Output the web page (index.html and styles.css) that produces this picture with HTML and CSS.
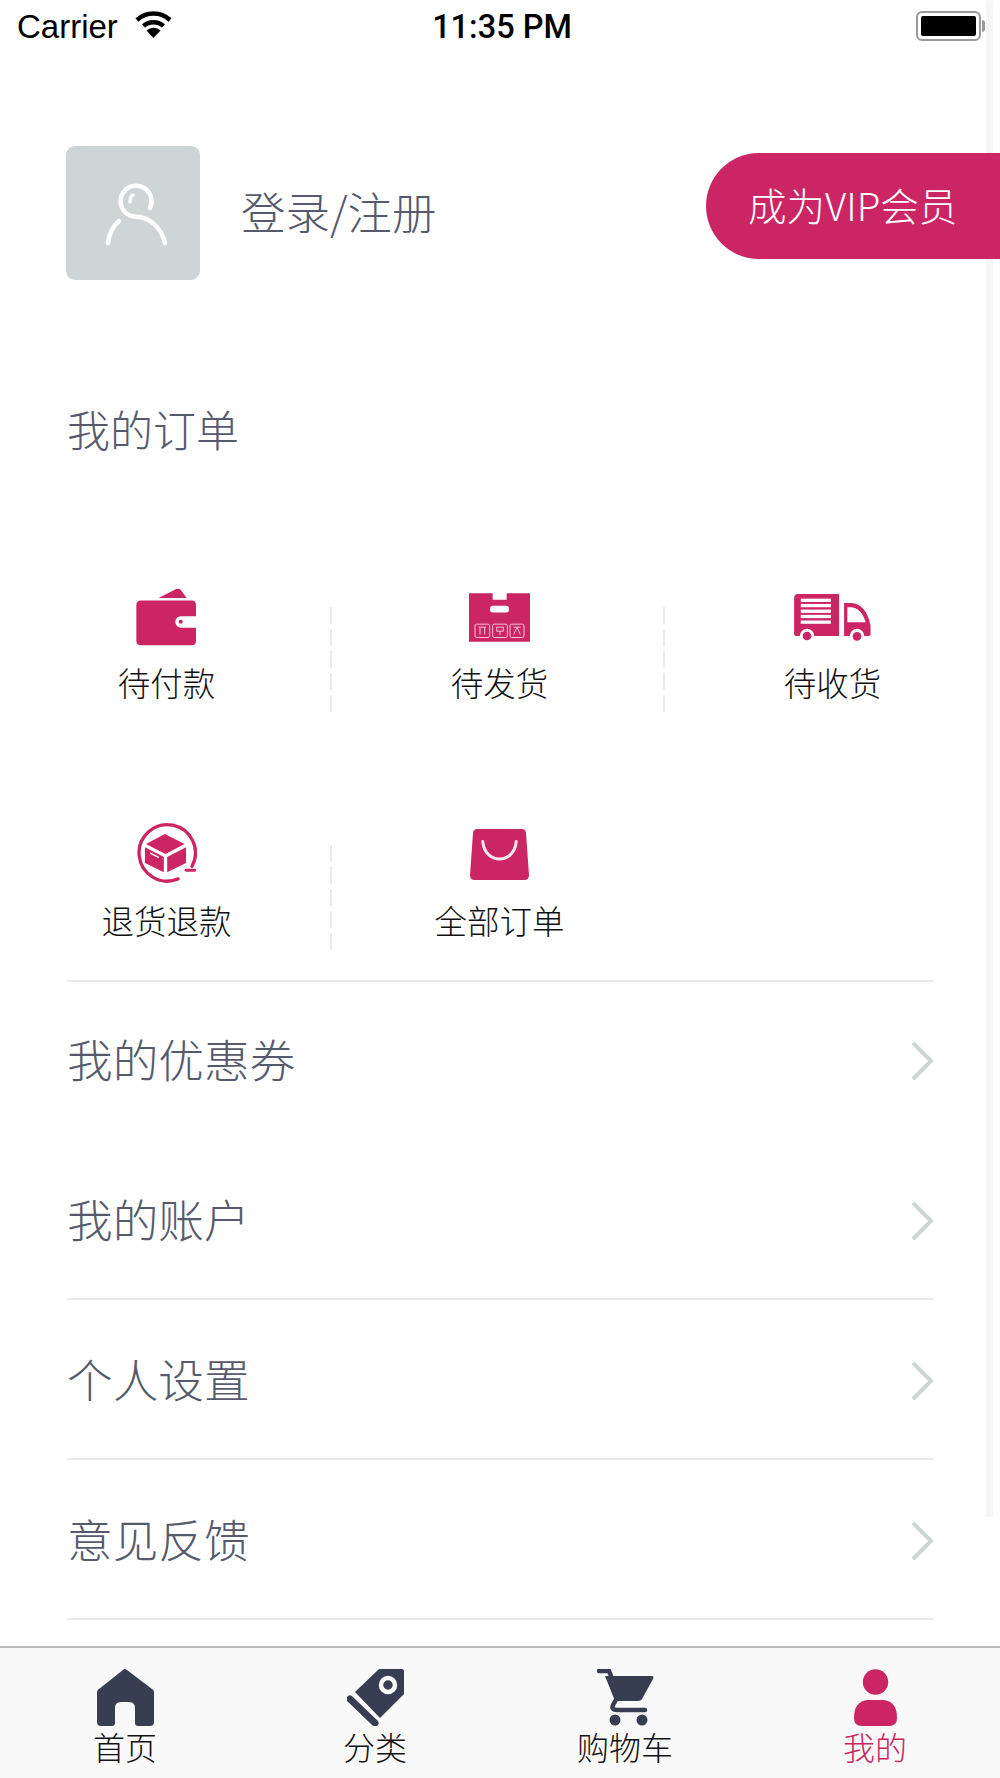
FILE: index.html
```html
<!DOCTYPE html>
<html lang="zh-CN">
<head>
    <meta charset="UTF-8">
    <meta name="viewport" content="width=device-width, initial-scale=1.0">
    <title>我的</title>
    <link rel="stylesheet" href="styles.css">
</head>
<body>
    <div class="page">
        <div class="scrollbar"></div>

        <div class="status-bar">
            <div class="status-left">
                <span>Carrier</span>
                <svg class="wifi" viewBox="0 0 37 27">
                    <path d="M2 9 A24 24 0 0 1 35 9" fill="none" stroke="#000" stroke-width="4.5"/>
                    <path d="M8.5 15 A15 15 0 0 1 28.5 15" fill="none" stroke="#000" stroke-width="4.5"/>
                    <path d="M18.5 27 L11.5 19.5 A10 10 0 0 1 25.5 19.5 Z" fill="#000"/>
                </svg>
            </div>
            <div class="status-time">11:35 PM</div>
            <div class="battery"><div class="battery-fill"></div></div>
        </div>

        <main class="content">
            <div class="profile">
                <div class="avatar">
                    <svg viewBox="0 0 134 134" width="134" height="134">
                        <g fill="none" stroke="#fff" stroke-width="4.5" stroke-linecap="round">
                            <path d="M84 62 A15.5 15.5 0 1 0 59 66 C62 70 67 71 74 71 C88 74 96 85 99 97"/>
                            <path d="M53 75 C46 81 43 89 42 97"/>
                            <path d="M64 56 C64 53 65 50 67 49" stroke-width="3.5"/>
                        </g>
                    </svg>
                </div>
                <div class="login-text">登录/注册</div>
                <div class="vip-button">成为VIP会员</div>
            </div>

            <div class="section-title">我的订单</div>

            <div class="order-grid">
                <div class="order-item has-divider">
                    <div class="order-icon">
                        <svg viewBox="108 55 182 175" width="61" height="58">
                            <path fill="#cb2564" d="M175 85 L228 58 Q236 55 242 61 L260 85 Z"/>
                            <path fill="#cb2564" d="M122 93 H275 Q288 93 288 106 V140 H243 A17.5 17.5 0 0 0 243 175 H288 V214 Q288 228 274 228 H122 Q108 228 108 214 V107 Q108 93 122 93 Z"/>
                            <circle fill="#cb2564" cx="242" cy="157" r="6"/>
                        </svg>
                    </div>
                    <div class="order-label">待付款</div>
                </div>
                <div class="order-item has-divider">
                    <div class="order-icon">
                        <svg viewBox="1107 70 183 146" width="61" height="49">
                            <path fill="#cb2564" d="M1107 70 H1178 V90 H1220 V70 H1290 V216 H1107 Z"/>
                            <rect fill="#fff" x="1170" y="108" width="57" height="20" rx="9"/>
                            <g fill="none" stroke="#f3c3d6" stroke-width="3">
                                <rect x="1125" y="163" width="44" height="40" rx="5"/>
                                <rect x="1178" y="163" width="44" height="40" rx="5"/>
                                <rect x="1230" y="163" width="42" height="40" rx="5"/>
                                <path d="M1136 172 H1158 M1140 172 V194 M1154 172 V194"/>
                                <path d="M1190 172 H1210 V184 H1190 Z M1200 184 V196"/>
                                <path d="M1240 172 H1262 M1251 172 L1241 194 M1251 172 L1261 194"/>
                            </g>
                        </svg>
                    </div>
                    <div class="order-label">待发货</div>
                </div>
                <div class="order-item">
                    <div class="order-icon">
                        <svg viewBox="732 70 232 142" width="77" height="47">
                            <path fill="#cb2564" d="M744 70 H868 V197 H793 A22 22 0 0 0 749 197 H738 Q732 197 732 191 V82 Q732 70 744 70 Z"/>
                            <g fill="#fff">
                                <rect x="752" y="84" width="91" height="10"/>
                                <rect x="752" y="100" width="91" height="10"/>
                                <rect x="752" y="117" width="91" height="10"/>
                                <rect x="752" y="133" width="91" height="10"/>
                                <rect x="752" y="150" width="91" height="10"/>
                            </g>
                            <circle fill="#cb2564" cx="771" cy="197" r="13"/>
                            <path fill="#cb2564" d="M883 97 H905 Q950 100 963 165 V191 Q963 197 957 197 H944 A22 22 0 0 0 900 197 H883 Z"/>
                            <path fill="#fff" d="M893 110 H905 Q935 112 948 155 H893 Z"/>
                            <circle fill="#cb2564" cx="922" cy="198" r="13"/>
                        </svg>
                    </div>
                    <div class="order-label">待收货</div>
                </div>
                <div class="order-item has-divider">
                    <div class="order-icon">
                        <svg class="return-icon" viewBox="165 67 190 186" width="63" height="62">
                            <path fill="none" stroke="#cb2564" stroke-width="10" stroke-linecap="round" d="M298 238 A85 85 0 1 1 340 200"/>
                            <path fill="none" stroke="#cb2564" stroke-width="9" stroke-linecap="round" d="M322 212 H348"/>
                            <path fill="#cb2564" d="M258 103 L318 133 L260 163 L201 133 Z"/>
                            <path fill="#cb2564" d="M198 143 L255 172 V218 L198 190 Z"/>
                            <path fill="#cb2564" d="M265 172 L322 143 V190 L265 218 Z"/>
                            <path fill="#fff" d="M214 158 L240 171 V176 L214 163 Z"/>
                        </svg>
                    </div>
                    <div class="order-label">退货退款</div>
                </div>
                <div class="order-item">
                    <div class="order-icon">
                        <svg class="bag-icon" viewBox="88 88 176 152" width="59" height="51">
                            <path fill="#cb2564" d="M110 88 H242 Q254 88 255 100 L264 226 Q264 240 250 240 H102 Q88 240 88 226 L97 100 Q98 88 110 88 Z"/>
                            <path fill="none" stroke="#fbe6ee" stroke-width="9" stroke-linecap="round" d="M126 125 C132 195 220 195 226 125"/>
                        </svg>
                    </div>
                    <div class="order-label">全部订单</div>
                </div>
            </div>

            <div class="menu-list">
                <div class="menu-row no-line">
                    <span>我的优惠券</span>
                    <svg class="chevron" viewBox="0 0 23 40"><path d="M2 2 L20 20 L2 38"/></svg>
                </div>
                <div class="menu-row">
                    <span>我的账户</span>
                    <svg class="chevron" viewBox="0 0 23 40"><path d="M2 2 L20 20 L2 38"/></svg>
                </div>
                <div class="menu-row">
                    <span>个人设置</span>
                    <svg class="chevron" viewBox="0 0 23 40"><path d="M2 2 L20 20 L2 38"/></svg>
                </div>
                <div class="menu-row">
                    <span>意见反馈</span>
                    <svg class="chevron" viewBox="0 0 23 40"><path d="M2 2 L20 20 L2 38"/></svg>
                </div>
            </div>
        </main>

        <nav class="tab-bar">
            <div class="tab">
                <svg viewBox="0 0 57 57" width="57" height="57">
                    <path fill="#383e52" d="M28 0 Q29 0 30 1 L55 20 Q57 21 57 23 V53 Q57 57 53 57 H41 Q38 57 38 54 V39 Q38 33 32 33 H24 Q18 33 18 39 V54 Q18 57 15 57 H4 Q0 57 0 53 V23 Q0 21 2 20 L26 1 Q27 0 28 0 Z"/>
                </svg>
                <div class="tab-label">首页</div>
            </div>
            <div class="tab">
                <svg viewBox="0 0 57 57" width="57" height="57">
                    <path fill="#383e52" d="M32 0 H55 Q57 0 57 2 V25 L33 49 L8 23 Z"/>
                    <circle cx="41" cy="16" r="7" fill="#383e52" stroke="#f9f9f9" stroke-width="4.5"/>
                    <path fill="none" stroke="#383e52" stroke-width="7" stroke-linecap="round" d="M3 30 L28 54"/>
                </svg>
                <div class="tab-label">分类</div>
            </div>
            <div class="tab">
                <svg viewBox="0 0 57 57" width="57" height="57">
                    <path fill="none" stroke="#383e52" stroke-width="4.5" stroke-linecap="round" d="M2 2 H12 L20 22"/>
                    <path fill="#383e52" d="M8 7 H55 Q57 7 56 10 L45 30 Q44 32 41 32 H18 Z"/>
                    <path fill="none" stroke="#383e52" stroke-width="4.5" stroke-linecap="round" d="M20 29 L16 36 Q14 41 20 41 H48"/>
                    <circle cx="18" cy="51" r="5.5" fill="#383e52"/>
                    <circle cx="45" cy="51" r="5.5" fill="#383e52"/>
                </svg>
                <div class="tab-label">购物车</div>
            </div>
            <div class="tab">
                <svg viewBox="0 0 43 57" width="43" height="57">
                    <circle cx="21.5" cy="13" r="12.7" fill="#cb2564"/>
                    <path fill="#cb2564" d="M14 31 H29 Q43 32 43 49 Q43 57 35 57 H8 Q0 57 0 49 Q0 32 14 31 Z"/>
                </svg>
                <div class="tab-label active">我的</div>
            </div>
        </nav>
    </div>
</body>
</html>
```

FILE: styles.css
```css
* {
    box-sizing: border-box;
}

body {
    margin: 0;
    background: #fff;
    font-family: "Noto Sans CJK SC", "Liberation Sans", sans-serif;
}

.page {
    position: relative;
    width: 1000px;
    height: 1778px;
    display: flex;
    flex-direction: column;
    overflow: hidden;
    background: #fff;
}

.scrollbar {
    position: absolute;
    top: 0;
    left: 986px;
    width: 7px;
    height: 1517px;
    border-radius: 3px;
    background: #f5f5f6;
}

.status-bar {
    position: relative;
    height: 50px;
    display: grid;
    grid-template-columns: 1fr auto 1fr;
    align-items: center;
    padding: 4px 19px 0 17px;
    font-family: "Liberation Sans", sans-serif;
    font-size: 33px;
    color: #000;
}

.status-left {
    display: flex;
    align-items: center;
    gap: 17px;
}

.wifi {
    width: 37px;
    height: 27px;
    margin-top: -6px;
}

.status-time {
    margin-left: 6px;
    font-family: Roboto, "Liberation Sans", sans-serif;
    font-weight: 500;
    font-size: 32.5px;
}

.battery {
    position: relative;
    justify-self: end;
    width: 65px;
    height: 30px;
    padding: 3px;
    border: 2px solid #9a9a9a;
    border-radius: 6px;
    margin-top: -2px;
}

.battery::after {
    content: "";
    position: absolute;
    top: 7px;
    right: -6px;
    width: 3px;
    height: 12px;
    border-radius: 0 3px 3px 0;
    background: #9a9a9a;
}

.battery-fill {
    height: 100%;
    border-radius: 2px;
    background: #000;
}

.content {
    position: relative;
    flex: 1;
}

.profile {
    display: flex;
    align-items: flex-start;
    padding: 96px 0 0 66px;
}

.avatar {
    width: 134px;
    height: 134px;
    border-radius: 9px;
    background: #cfd4d7;
    flex-shrink: 0;
}

.login-text {
    margin: 29px 0 0 41px;
    font-size: 44.5px;
    font-weight: 300;
    line-height: 72px;
    color: #565a6c;
}

.vip-button {
    margin: 7px 0 0 auto;
    width: 294px;
    height: 106px;
    padding: 0 0 4px 42px;
    border-radius: 53px 0 0 53px;
    background: #cb2564;
    color: #fff;
    font-size: 38.5px;
    font-weight: 300;
    line-height: 102px;
}

.section-title {
    margin: 118px 0 0 67px;
    font-size: 43px;
    font-weight: 300;
    line-height: 60px;
    color: #565a6c;
}

.order-grid {
    display: grid;
    grid-template-columns: repeat(3, 333px);
    grid-template-rows: 238px 155px;
    margin-top: 129px;
}

.order-item {
    position: relative;
    display: flex;
    flex-direction: column;
    align-items: center;
}

.has-divider::after {
    content: "";
    position: absolute;
    top: 20px;
    right: 1px;
    width: 2px;
    height: 105px;
    background: repeating-linear-gradient(to bottom, #e8ecf1 0, #e8ecf1 17px, transparent 17px, transparent 22px);
}

.order-icon {
    height: 60px;
    display: flex;
    align-items: center;
    justify-content: center;
}

.return-icon {
    margin: -5px 3px 0 0;
}

.bag-icon {
    margin-top: -2px;
}

.order-label {
    margin-top: 13px;
    font-size: 32.5px;
    line-height: 44px;
    font-weight: 300;
    color: #111;
}

.menu-list {
    margin: 0 66px 0 67px;
    border-top: 2px solid #e9ebee;
}

.menu-row {
    height: 160px;
    display: flex;
    align-items: center;
    justify-content: space-between;
    padding-top: 4px;
    border-bottom: 2px solid #e9ebee;
    font-size: 45.7px;
    font-weight: 300;
    color: #565a6c;
}

.menu-row span {
    margin-bottom: 7px;
}

.no-line {
    height: 158px;
    padding-top: 0;
    border-bottom: none;
}

.chevron {
    width: 23px;
    height: 40px;
    fill: none;
    stroke: #cfd6d8;
    stroke-width: 4;
}

.tab-bar {
    display: grid;
    grid-template-columns: repeat(4, 250px);
    height: 132px;
    padding-top: 21px;
    border-top: 2px solid #bdbdbd;
    background: #f9f9f9;
}

.tab {
    display: flex;
    flex-direction: column;
    align-items: center;
}

.tab-label {
    margin-top: -2px;
    font-size: 32px;
    line-height: 44px;
    font-weight: 300;
    color: #111;
}

.tab-label.active {
    color: #cb2564;
}
```
